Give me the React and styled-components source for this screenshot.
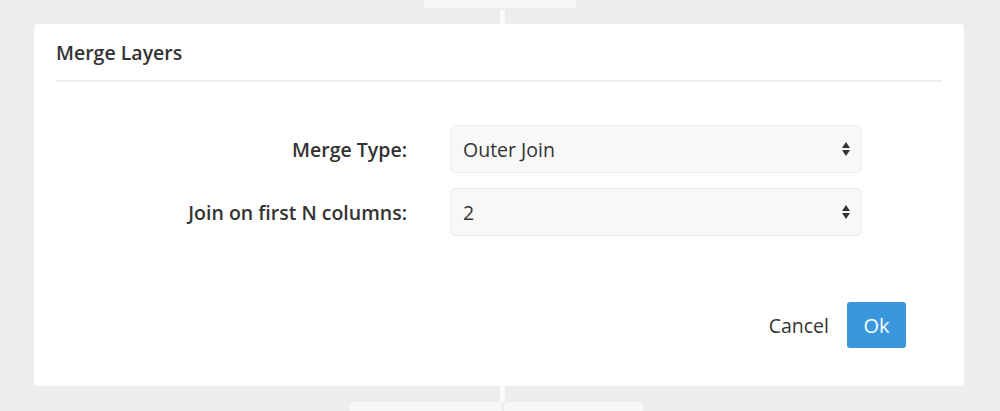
import React from "react";
import styled, { createGlobalStyle } from "styled-components";

const Global = createGlobalStyle`
  html, body { margin: 0; padding: 0; background: #ededed; }
  body { font-family: "Open Sans", "Noto Sans", sans-serif; color: #333; }
  * { box-sizing: border-box; }
`;

const Page = styled.div`
  width: 1000px;
  height: 411px;
  overflow: hidden;
  display: flex;
  flex-direction: column;
  & > * { flex-shrink: 0; }
`;

const TopStub = styled.div`
  margin-left: 424px;
  width: 152px;
  height: 8px;
  background: #f7f7f7;
  border-radius: 0 0 4px 4px;
`;

const Connector = styled.div`
  margin-left: 500px;
  width: 5px;
  height: ${(p) => p.$h}px;
  margin-top: ${(p) => p.$top || 0}px;
  background: #fafafa;
`;

const Card = styled.div`
  margin-left: 34px;
  width: 930px;
  height: 362px;
  background: #fff;
  border-radius: 4px;
  padding: 0 22px;
  display: flex;
  flex-direction: column;
`;

const Header = styled.div`
  height: 58px;
  display: flex;
  align-items: center;
  font-size: 19.5px;
  font-weight: 600;
  color: #333;
  padding-top: 1px;
  border-bottom: 2px solid #f0f0f0;
`;

const Form = styled.div`
  margin-top: 43px;
  display: grid;
  grid-template-columns: 351px 412px;
  column-gap: 43px;
  row-gap: 15px;
  align-items: center;
`;

const Label = styled.div`
  text-align: right;
  font-size: 19.5px;
  font-weight: 600;
  color: #333;
`;

const Select = styled.div`
  height: 48px;
  background: #f8f8f8;
  border: 1px solid #ececec;
  border-radius: 5px;
  display: flex;
  align-items: center;
  justify-content: space-between;
  padding: 0 10px 0 12px;
  font-size: 19.5px;
  color: #333;
`;

const Footer = styled.div`
  margin-top: 66px;
  display: flex;
  justify-content: flex-end;
  align-items: center;
  gap: 18px;
  padding-right: 36px;
`;

const CancelButton = styled.button`
  background: none;
  border: none;
  padding: 0;
  font-family: inherit;
  font-size: 19.5px;
  color: #333;
`;

const OkButton = styled.button`
  width: 59px;
  height: 46px;
  background: #3a97dd;
  border: none;
  border-radius: 3px;
  color: #fff;
  font-family: inherit;
  font-size: 20px;
`;

const BottomRow = styled.div`
  margin-left: 350px;
  display: flex;
  gap: 2px;
`;

const BottomBox = styled.div`
  width: ${(p) => p.$w}px;
  height: 12px;
  background: #f7f7f7;
  border-radius: 4px 4px 0 0;
`;

const Arrows = () => (
  <svg width="10" height="16" viewBox="0 0 10 16">
    <path d="M1 7 L5 1 L9 7 Z" fill="#333" />
    <path d="M1 9 L5 15 L9 9 Z" fill="#333" />
  </svg>
);

export default function App() {
  return (
    <>
      <Global />
      <Page>
        <TopStub />
        <Connector $top={2} $h={14} />
        <Card>
          <Header>Merge Layers</Header>
          <Form>
            <Label>Merge Type:</Label>
            <Select>
              <span>Outer Join</span>
              <Arrows />
            </Select>
            <Label>Join on first N columns:</Label>
            <Select>
              <span>2</span>
              <Arrows />
            </Select>
          </Form>
          <Footer>
            <CancelButton>Cancel</CancelButton>
            <OkButton>Ok</OkButton>
          </Footer>
        </Card>
        <Connector $h={16} />
        <BottomRow>
          <BottomBox $w={152} />
          <BottomBox $w={139} />
        </BottomRow>
      </Page>
    </>
  );
}
